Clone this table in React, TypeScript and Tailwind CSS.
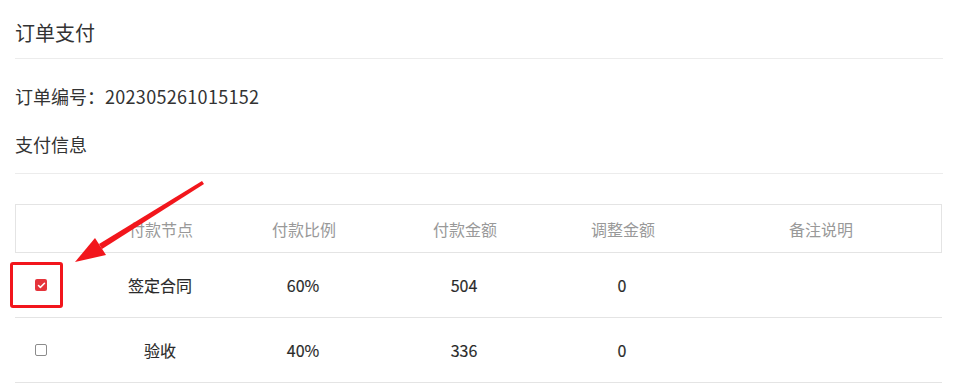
import { Check } from 'lucide-react';

type Row = {
  node: string;
  ratio: string;
  amount: string;
  adjust: string;
  note: string;
  checked: boolean;
};

const ROWS: Row[] = [
  { node: '签定合同', ratio: '60%', amount: '504', adjust: '0', note: '', checked: true },
  { node: '验收', ratio: '40%', amount: '336', adjust: '0', note: '', checked: false },
];

const COLS = 'grid grid-cols-[83px_124px_162px_160px_156px_1fr]';

function Checkbox({ checked }: { checked: boolean }) {
  return checked ? (
    <span className="flex h-3 w-3 items-center justify-center rounded-[2px] bg-[#e5343b]">
      <Check className="h-[9px] w-[9px] text-white" strokeWidth={4} />
    </span>
  ) : (
    <span className="block h-3 w-3 rounded-[2px] border border-[#8c8c8c] bg-white" />
  );
}

export default function App() {
  return (
    <div
      className="relative h-[385px] w-[965px] overflow-hidden bg-white text-[#333]"
      style={{ fontFamily: '"Noto Sans CJK SC", "Noto Sans", sans-serif' }}
    >
      <div className="ml-[15px] w-[928px]">
        <div className="border-b border-[#ececec] pb-[12px] pt-[20px] text-[20px] leading-[26px]">订单支付</div>
        <div className="mt-[25px] text-[18px] leading-[24px]">
          订单编号：<span className="tracking-[0.3px]">202305261015152</span>
        </div>
        <div className="mt-[24px] border-b border-[#ececec] pb-[17px] text-[18px] leading-[24px]">支付信息</div>

        <div className="mt-[30px] w-[927px] text-[16px]">
          <div className={`${COLS} h-[49px] items-center border border-[#e4e4e4] text-[#999]`}>
            <div />
            <div className="text-center">付款节点</div>
            <div className="text-center">付款比例</div>
            <div className="text-center">付款金额</div>
            <div className="text-center">调整金额</div>
            <div className="text-center">备注说明</div>
          </div>
          {ROWS.map((r) => (
            <div
              key={r.node}
              className={`${COLS} h-[65px] items-center border-b border-[#e4e4e4] text-[#2a2a2a] [-webkit-text-stroke:0.15px_#2a2a2a]`}
            >
              <div className="pl-[20px]">
                <Checkbox checked={r.checked} />
              </div>
              <div className="text-center">{r.node}</div>
              <div className="text-center">{r.ratio}</div>
              <div className="text-center">{r.amount}</div>
              <div className="text-center">{r.adjust}</div>
              <div className="text-center">{r.note}</div>
            </div>
          ))}
        </div>
      </div>

      {/* annotation: box around the first checkbox plus a pointer arrow */}
      <div className="absolute left-[10px] top-[262px] h-[46px] w-[53px] rounded-[3px] border-[3px] border-[#f2161c]" />
      <svg className="absolute left-0 top-0" width="965" height="385" viewBox="0 0 965 385">
        <polygon points="75,262 106,255 95,238" fill="#f2161c" />
        <polygon points="99,244 102,249 204,184 202,181" fill="#f2161c" />
      </svg>
    </div>
  );
}
